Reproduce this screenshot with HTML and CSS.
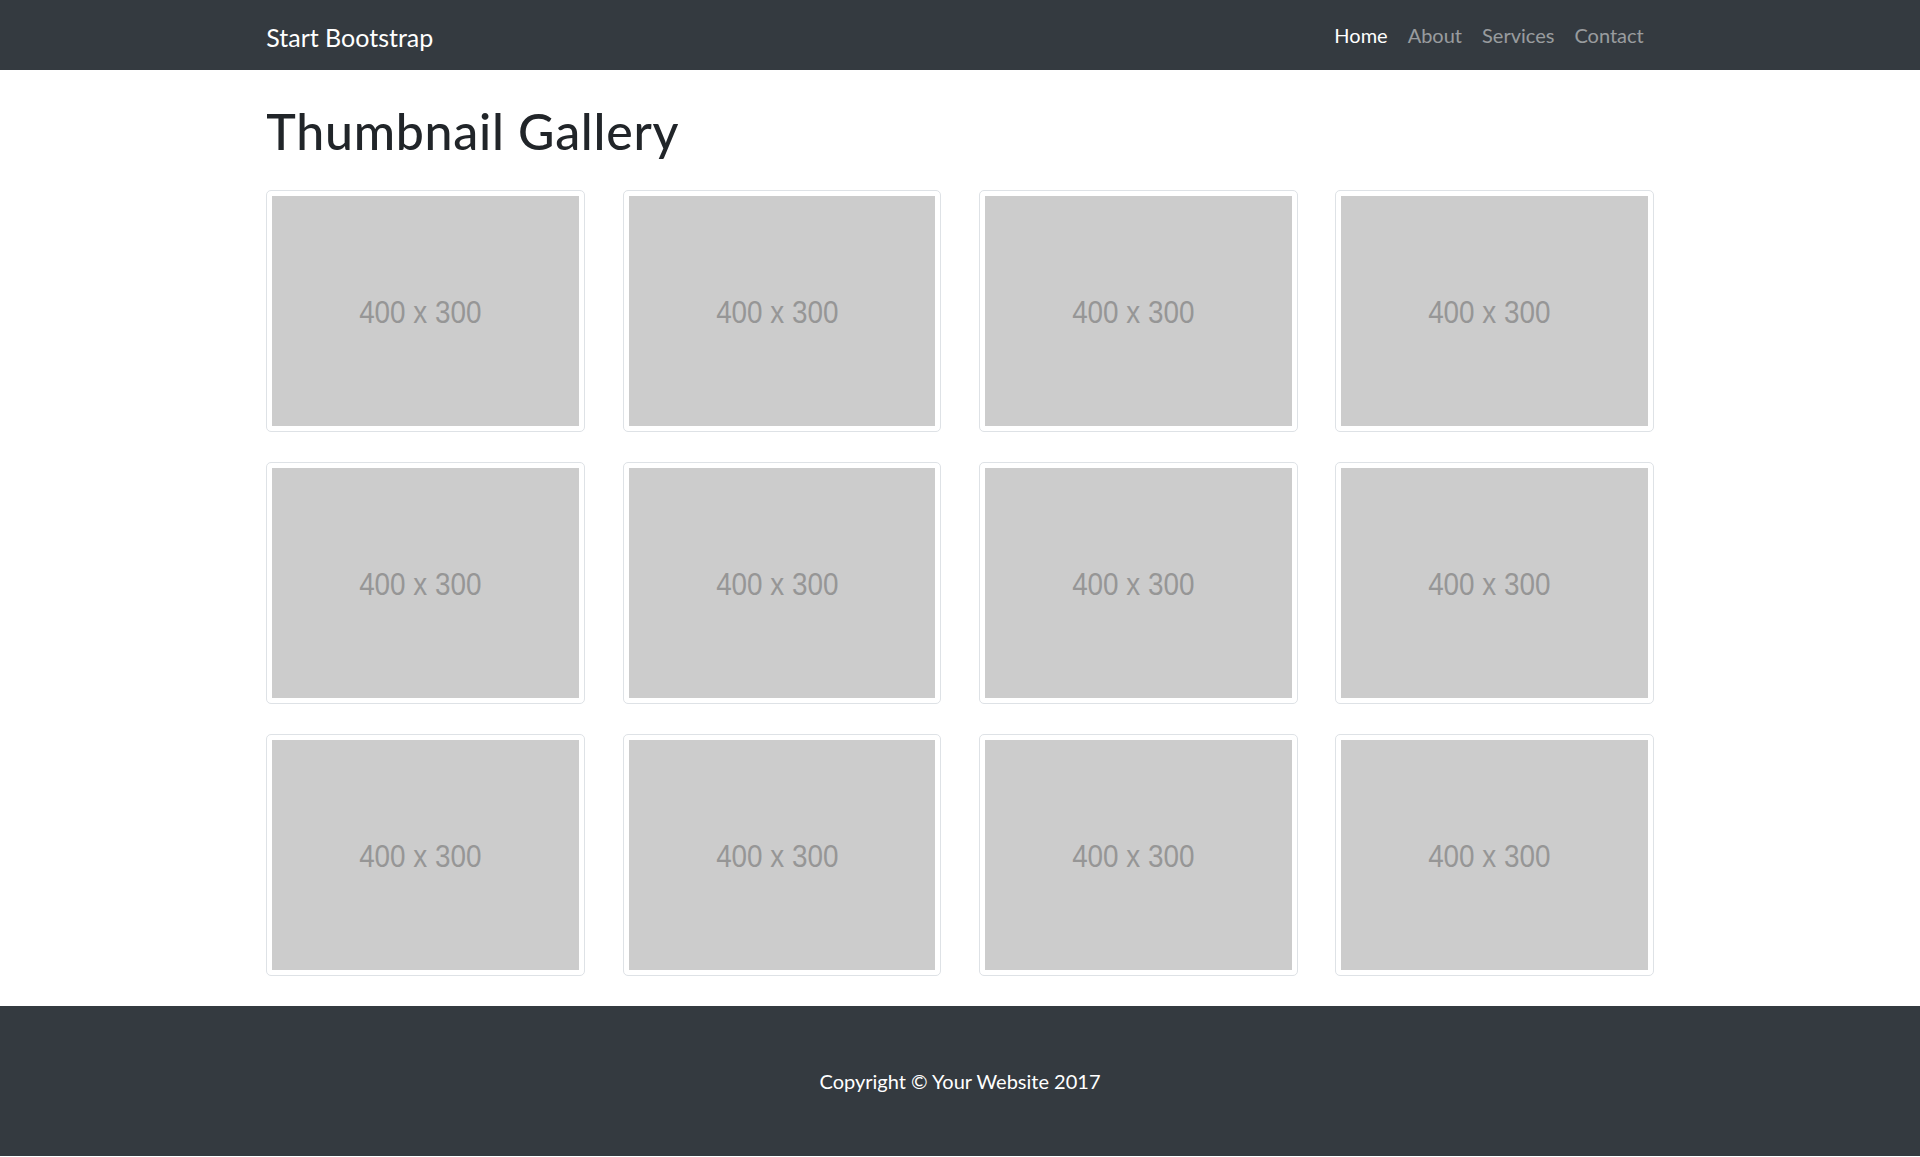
FILE: index.html
```html
<!DOCTYPE html>
<html lang="en">
<head>
<meta charset="utf-8">
<title>Thumbnail Gallery - Start Bootstrap Template</title>
<link rel="stylesheet" href="styles.css">
</head>
<body>
<nav class="navbar">
  <div class="container nav-inner">
    <a class="brand" href="#">Start Bootstrap</a>
    <ul class="nav-links">
      <li><a class="nav-link active" href="#">Home</a></li>
      <li><a class="nav-link" href="#">About</a></li>
      <li><a class="nav-link" href="#">Services</a></li>
      <li><a class="nav-link" href="#">Contact</a></li>
    </ul>
  </div>
</nav>

<main class="container">
  <h1 class="title">Thumbnail Gallery</h1>
  <div class="gallery">
    <a class="thumb" href="#"><div class="ph"><span>400 x 300</span></div></a>
    <a class="thumb" href="#"><div class="ph"><span>400 x 300</span></div></a>
    <a class="thumb" href="#"><div class="ph"><span>400 x 300</span></div></a>
    <a class="thumb" href="#"><div class="ph"><span>400 x 300</span></div></a>
    <a class="thumb" href="#"><div class="ph"><span>400 x 300</span></div></a>
    <a class="thumb" href="#"><div class="ph"><span>400 x 300</span></div></a>
    <a class="thumb" href="#"><div class="ph"><span>400 x 300</span></div></a>
    <a class="thumb" href="#"><div class="ph"><span>400 x 300</span></div></a>
    <a class="thumb" href="#"><div class="ph"><span>400 x 300</span></div></a>
    <a class="thumb" href="#"><div class="ph"><span>400 x 300</span></div></a>
    <a class="thumb" href="#"><div class="ph"><span>400 x 300</span></div></a>
    <a class="thumb" href="#"><div class="ph"><span>400 x 300</span></div></a>
  </div>
</main>

<footer class="footer">
  <p class="copy">Copyright &copy; Your Website 2017</p>
</footer>
</body>
</html>
```
FILE: styles.css
```css
* { box-sizing: border-box; }
html, body { margin: 0; padding: 0; }
body {
  font-family: Lato, "Open Sans", "Liberation Sans", sans-serif;
  font-size: 20px;
  line-height: 1.5;
  color: #212529;
  background: #fff;
}
a { text-decoration: none; }

.container {
  width: 1425px;
  margin: 0 auto;
  padding: 0 18.75px;
}

.navbar {
  background: #343a40;
  padding: 10px 0;
}
.nav-inner {
  display: flex;
  align-items: center;
  justify-content: space-between;
}
.brand {
  color: #fff;
  font-size: 25px;
  line-height: 37.5px;
  padding: 8.5px 0 4px;
}
.nav-links {
  list-style: none;
  margin: 0;
  padding: 0;
  display: flex;
}
.nav-link {
  display: block;
  padding: 10px 10px;
  line-height: 30px;
  color: rgba(255, 255, 255, 0.5);
}
.nav-link.active { color: #fff; }

.title {
  margin: 30px 0;
  font-size: 50px;
  font-weight: 500;
  line-height: 1.2;
  letter-spacing: 0.75px;
  color: #212529;
  position: relative;
  top: 1px;
}

.gallery {
  display: grid;
  grid-template-columns: repeat(4, 1fr);
  column-gap: 37.5px;
  row-gap: 30px;
  padding-bottom: 30px;
}
.thumb {
  display: block;
  padding: 5px;
  background: #fff;
  border: 1px solid #dee2e6;
  border-radius: 5px;
}
.ph {
  aspect-ratio: 4 / 3;
  background: #ccc;
  display: flex;
  align-items: center;
  justify-content: center;
}
.ph span {
  display: inline-block;
  font-family: "Liberation Sans", Arial, sans-serif;
  font-size: 32px;
  line-height: 1;
  color: #969696;
  transform: translate(-5px, 1px) scaleX(0.87);
}

.footer {
  background: #343a40;
  padding: 60px 0;
}
.copy {
  margin: 0;
  text-align: center;
  color: #fff;
  line-height: 30px;
}
```
